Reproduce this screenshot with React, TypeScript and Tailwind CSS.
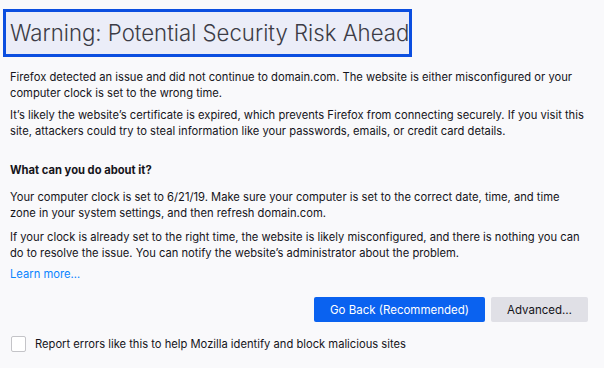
export default function App() {
  return (
    <div className="w-[604px] h-[368px] overflow-hidden bg-[#f9f9fb] text-[#15141a] font-['Inter','Liberation_Sans',sans-serif]">
      <div className="pt-[9px] pl-[3px]">
        <div className="w-[409px] h-[48px] border-[3px] border-[#0b4ee0] bg-[#ebedf8] flex items-center pl-[4px]">
          <h1 className="text-[22.2px] font-light text-[#3c3c46] leading-none whitespace-nowrap">
            Warning: Potential Security Risk Ahead
          </h1>
        </div>
      </div>

      <div className="pl-[10px] pr-[16px] pt-[12px] text-[11.2px] leading-[16px] whitespace-nowrap">
        <p>
          Firefox detected an issue and did not continue to domain.com. The website is either misconfigured or your
          <br />
          computer clock is set to the wrong time.
        </p>
        <p className="mt-[6px]">
          It’s likely the website’s certificate is expired, which prevents Firefox from connecting securely. If you visit this
          <br />
          site, attackers could try to steal information like your passwords, emails, or credit card details.
        </p>

        <h2 className="mt-[23px] font-bold">What can you do about it?</h2>
        <p className="mt-[11px]">
          Your computer clock is set to 6/21/19. Make sure your computer is set to the correct date, time, and time
          <br />
          zone in your system settings, and then refresh domain.com.
        </p>
        <p className="mt-[8px]">
          If your clock is already set to the right time, the website is likely misconfigured, and there is nothing you can
          <br />
          do to resolve the issue. You can notify the website’s administrator about the problem.
        </p>

        <a href="#" className="block mt-[5px] text-[#0a84ff]">
          Learn more…
        </a>

        <div className="flex justify-end gap-[6px] mt-[15px]">
          <button className="w-[171px] h-[25px] rounded-[2px] bg-[#0a62f0] text-white text-[11.5px]">
            Go Back (Recommended)
          </button>
          <button className="w-[97px] h-[25px] rounded-[2px] bg-[#e0e0e6] text-[#15141a] text-[11.5px]">
            Advanced…
          </button>
        </div>

        <label className="flex items-center gap-[9px] mt-[14px] pl-[1px]">
          <span className="w-[15px] h-[16px] rounded-[2px] border border-[#c4c4c8] bg-white" />
          <span>Report errors like this to help Mozilla identify and block malicious sites</span>
        </label>
      </div>
    </div>
  );
}
